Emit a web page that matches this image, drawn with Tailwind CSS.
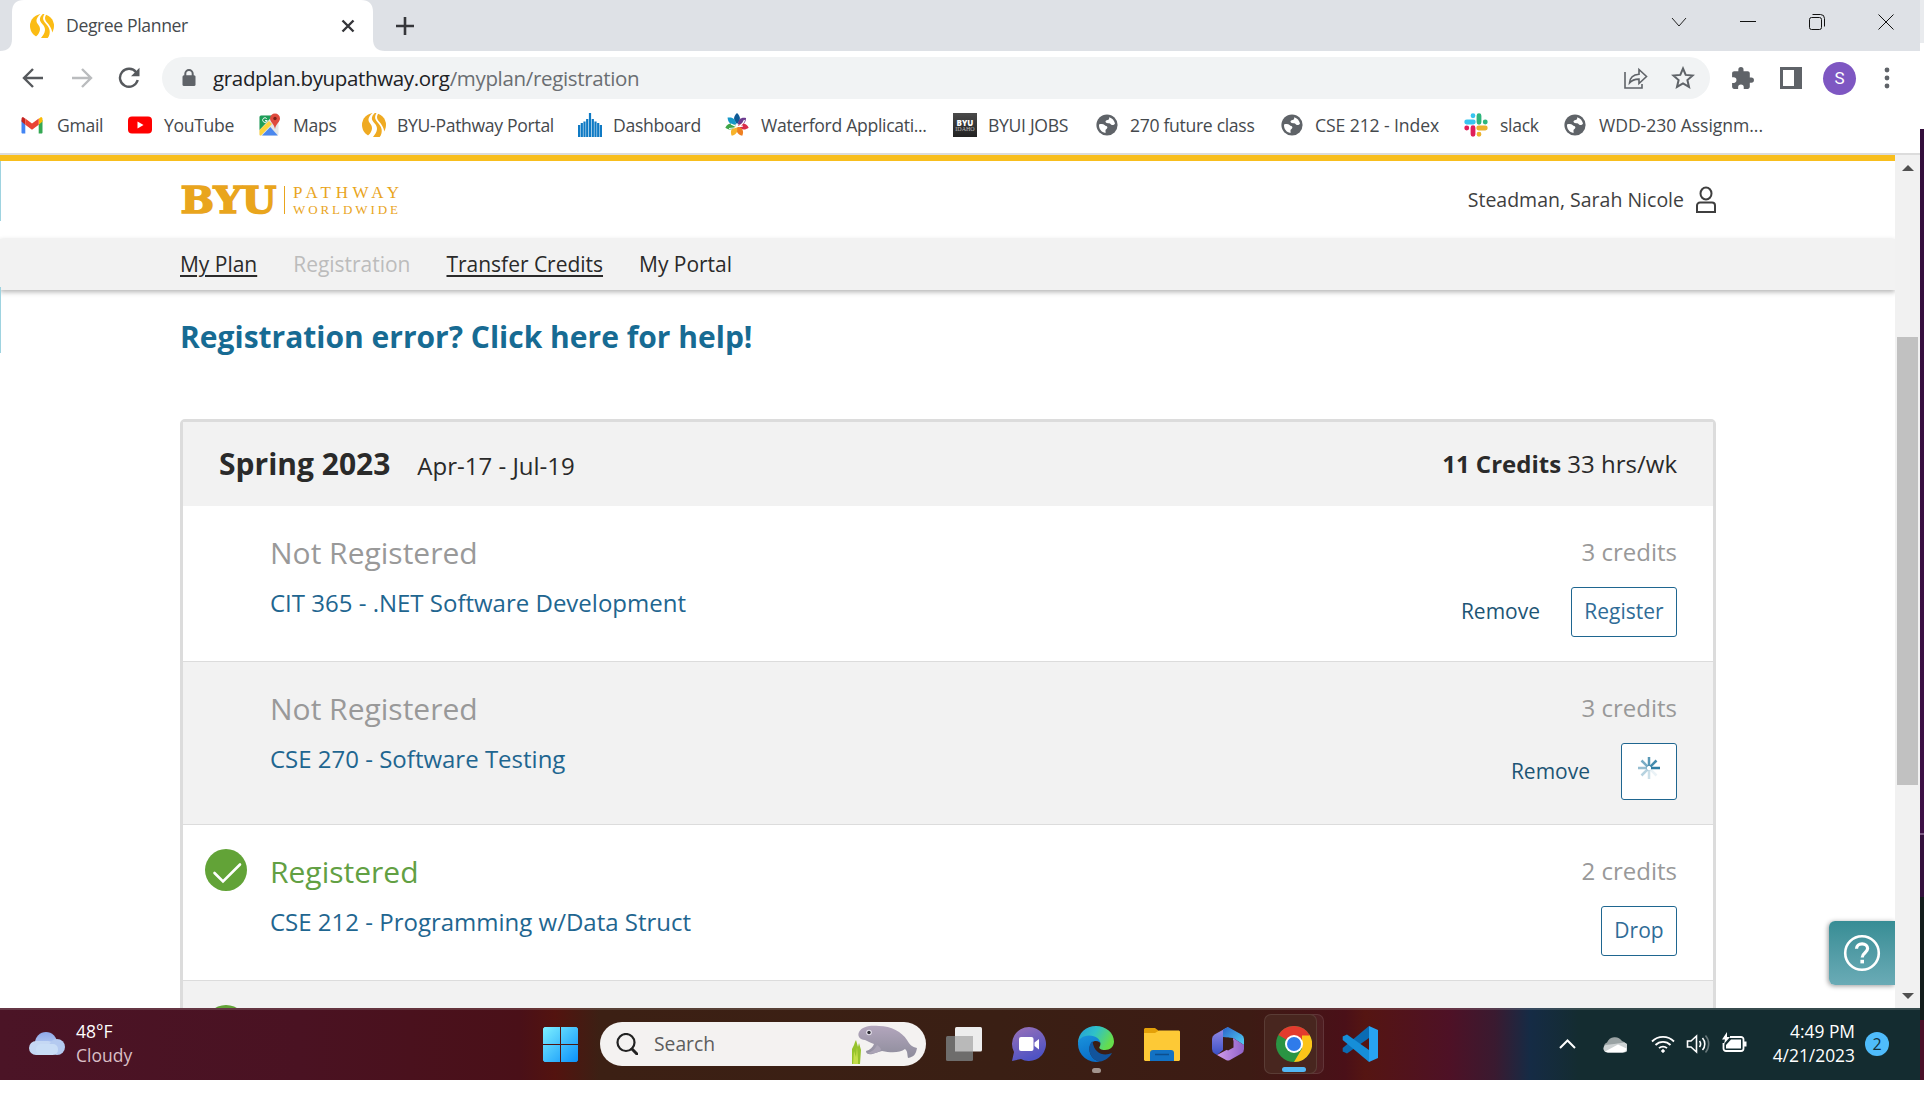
<!DOCTYPE html>
<html lang="en">
<head>
<meta charset="utf-8">
<title>Degree Planner</title>
<script src="https://cdn.jsdelivr.net/npm/@tailwindcss/browser@4"></script>
</head>
<body class="flex h-[1096px] w-[1924px] flex-col overflow-hidden bg-white font-['Open_Sans','Noto_Sans',sans-serif] whitespace-nowrap">

<svg class="hidden">
  <symbol id="globe" viewBox="0 0 24 24">
    <circle cx="12" cy="12" r="10.6" fill="#5f6368"/>
    <path d="M4 11.5c2.400-.8 4.400-.6 5.500.6 1 1.200 2.900.6 2.900 2.300 0 1.300-1.700 1.500-1.900 2.900-.1 1 .3 1.700 0 2.700C6.400 19.300 3.700 15.800 4 11.500zM14.200 4.200c3 .9 5.200 3.200 5.800 6.300-.8 1.200-1.900 1.900-3.200 1.500-1.300-.3-1.200-1.500-2.700-1.700-1.500-.1-2.900.1-3.500-1.200-.5-1.200.7-1.900 1.900-2.100 1.300-.2 1.900-1.300 1.700-2.800z" fill="#fff"/>
  </symbol>
  <symbol id="pathway" viewBox="0 0 24 24">
    <circle cx="12" cy="12" r="12" fill="currentColor"/>
    <path d="M10.500 0C5 5 6 8 8.500 11c3 4 1.500 8.500-4 13h17.500c1.500-6-1-11-4.500-15C15 6 14 4 16.500 0z" fill="#fff"/>
    <path d="M12.800 0C8.500 4 9.500 7 12.500 10.300c4 4.200 3 8.700-1.500 13.700h7c3-5.500 2-9.500-1.500-13.500C13 6.500 12 4.500 14.500 0z" fill="currentColor"/>
    <path d="M0 18c2 3.500 4 5 7 6H0zM24 17c-1.500 3.500-3.500 5.500-6.500 7H24z" fill="#fff"/>
  </symbol>
</svg>

<div class="flex h-[1080px]">
<div class="relative flex w-[1920px] flex-col">

  <!-- tab strip -->
  <div class="flex h-[51px] justify-between bg-[#dee1e6]">
    <div class="flex items-center">
      <div class="relative flex h-[51px] w-[385px] items-center pl-[30px]">
        <svg class="absolute inset-0" width="385" height="51"><path d="M0 51c8 0 12-4 12-12V12C12 4 16 0 24 0h337c8 0 12 4 12 12v27c0 8 4 12 12 12z" fill="#fff"/></svg>
        <svg class="relative text-[#fbbc14]" width="24" height="24"><use href="#pathway"/></svg>
        <span class="relative ml-[12px] w-[275px] text-[17.600px] tracking-[-.38px] text-[#45494d]">Degree Planner</span>
        <svg class="relative" width="14" height="14" viewBox="0 0 14 14"><path d="M1.500 1.500l11 11m0-11l-11 11" stroke="#35363a" stroke-width="2.400"/></svg>
      </div>
      <svg class="ml-[11px]" width="18" height="18" viewBox="0 0 18 18"><path d="M9 0v18M0 9h18" stroke="#35363a" stroke-width="2.600"/></svg>
    </div>
    <div class="flex h-[43px] items-center">
      <div class="flex w-[69px] justify-center"><svg width="16" height="16" fill="none" stroke="#222"><path d="M1 4l7 8 7-8"/></svg></div>
      <div class="flex w-[69px] justify-center"><svg width="16" height="16" fill="none" stroke="#111"><path d="M0 7.500h16"/></svg></div>
      <div class="flex w-[69px] justify-center"><svg width="16" height="16" fill="none" stroke="#111"><rect x="0.500" y="3.500" width="12" height="12" rx="2"/><path d="M3.500.500h8a4 4 0 0 1 4 4v8"/></svg></div>
      <div class="flex w-[69px] justify-center"><svg width="16" height="16" fill="none" stroke="#111"><path d="M.5.500l15 15m0-15l-15 15"/></svg></div>
    </div>
  </div>

  <!-- toolbar -->
  <div class="flex h-[54px] items-center bg-white pl-[22px]">
    <svg width="22" height="22" viewBox="0 0 22 22" fill="none" stroke="#56595d" stroke-width="2.400"><path d="M21 11H2.500M11 2l-9 9 9 9"/></svg>
    <svg class="ml-[27px]" width="22" height="22" viewBox="0 0 22 22" fill="none" stroke="#babcbe" stroke-width="2.400"><path d="M1 11h18.500M11 2l9 9-9 9"/></svg>
    <svg class="ml-[25px]" width="22" height="22" viewBox="0 0 22 22"><path d="M18.200 5.400A9 9 0 1 0 19.700 13" fill="none" stroke="#56595d" stroke-width="2.400"/><path d="M21.500.8v8.400H13z" fill="#56595d"/></svg>
    <div class="ml-[22px] flex h-[42px] w-[1548px] items-center rounded-full bg-[#f1f3f4] pl-[20px]">
      <svg width="14" height="18" viewBox="0 0 14 18"><path d="M3.300 7V4.800a3.700 3.700 0 0 1 7.400 0V7" fill="none" stroke="#5f6368" stroke-width="2"/><rect x=".5" y="6.300" width="13" height="10.700" rx="1.500" fill="#5f6368"/></svg>
      <span class="ml-[17px] w-[1411px] pt-px text-[20.500px] tracking-[-.34px] text-[#202124]">gradplan.byupathway.org<span class="text-[#6a6e72]">/myplan/registration</span></span>
      <svg width="24" height="24" viewBox="0 0 24 24" fill="none" stroke="#5f6368" stroke-width="1.600"><path d="M1 6v16h17v-4"/><path d="M5.500 17c.4-5.500 3.800-8.500 9.500-8.800V3.500l7.500 7-7.500 7v-4.400c-4-.1-7 1-9.500 3.900z"/></svg>
      <svg class="ml-[23px]" width="24" height="24" viewBox="0 0 24 24" fill="none" stroke="#5f6368" stroke-width="2"><path d="M12 2.500l2.700 6.400 7 .6-5.300 4.600 1.600 6.800-6-3.600-6 3.600 1.600-6.800-5.300-4.600 7-.6z"/></svg>
    </div>
    <svg class="ml-[20px]" width="25" height="25" viewBox="0 0 24 24" fill="#5f6368"><path d="M20.500 11H19V7c0-1.100-.9-2-2-2h-4V3.500a2.500 2.500 0 0 0-5 0V5H4c-1.100 0-2 .9-2 2v3.800h1.500a2.700 2.700 0 0 1 0 5.400H2V20c0 1.100.9 2 2 2h3.800v-1.500a2.700 2.700 0 0 1 5.400 0V22H17c1.100 0 2-.9 2-2v-4h1.500a2.500 2.500 0 0 0 0-5z"/></svg>
    <svg class="ml-[25px]" width="22" height="22" viewBox="0 0 22 22"><path d="M0 0h22v22H0zM3 3v16h11V3z" fill="#5f6368" fill-rule="evenodd"/></svg>
    <div class="ml-[21px] flex h-[33px] w-[33px] items-center justify-center rounded-full bg-[#7e57c2] pt-px text-[17px] text-white font-[Roboto,sans-serif]">S</div>
    <svg class="ml-[28px]" width="6" height="22" fill="#5f6368"><circle cx="3" cy="3" r="2.400"/><circle cx="3" cy="11" r="2.400"/><circle cx="3" cy="19" r="2.400"/></svg>
  </div>

  <!-- bookmarks bar -->
  <div class="flex h-[50px] items-center border-b-2 border-[#dcdcdc] bg-white pb-[7px] pl-[20px] text-[17.600px] tracking-[-.32px] text-[#45494d]">
    <div class="flex w-[108px] shrink-0 items-center gap-[13px]">
      <svg width="24" height="24" viewBox="0 0 24 24"><path d="M2 20.500h3.300v-9L1.500 6.800v13z" fill="#4285f4"/><path d="M18.700 20.500H22l.5-.7v-13l-3.800 4.700z" fill="#34a853"/><path d="M18.700 5.800l2.300-1.700c1 .2 1.500 1 1.500 2v2.500l-3.800 3.200z" fill="#fbbc04"/><path d="M5.300 5.800L3 4.100c-1 .2-1.500 1-1.500 2v2.500l3.800 3.200z" fill="#c5221f"/><path d="M5.300 5.500L12 10.600l6.700-5.100v6.200L12 16.800l-6.700-5.100z" fill="#ea4335"/></svg>
      Gmail</div>
    <div class="flex w-[130px] shrink-0 items-center gap-[12px]">
      <svg width="24" height="24" viewBox="0 0 24 24"><rect x="0" y="3.500" width="24" height="17" rx="4" fill="#f00"/><path d="M9.500 8.500v7l6-3.500z" fill="#fff"/></svg>
      YouTube</div>
    <div class="flex w-[104px] shrink-0 items-center gap-[11px]">
      <svg width="24" height="24" viewBox="0 0 24 24"><rect x="1.500" y="2.500" width="19" height="20" rx="1.500" fill="#e4e7e8"/><path d="M1.500 4a1.500 1.500 0 0 1 1.500-1.500h12L1.500 17z" fill="#1e9e58"/><path d="M1.500 17L11 8l3 3L3 22.500H2a1 1 0 0 1-.5-1z" fill="#fdd23c"/><path d="M4 22.500l8.300-8.500 7.500 8.500z" fill="#4a87ee"/><path d="M17 .5a5 5 0 0 0-5 5c0 3.500 4 5 5 10.500 1-5.500 5-7 5-10.500a5 5 0 0 0-5-5z" fill="#df4b3e"/><circle cx="17" cy="5.500" r="1.700" fill="#7c2119"/><path d="M8.700 5.600a2.300 2.300 0 1 0 .5 2H7" stroke="#fff" fill="none"/></svg>
      Maps</div>
    <div class="flex w-[216px] shrink-0 items-center gap-[11px]"><svg class="text-[#efaa22]" width="24" height="24"><use href="#pathway"/></svg>BYU-Pathway Portal</div>
    <div class="flex w-[147px] shrink-0 items-center gap-[11px]">
      <svg width="24" height="24" viewBox="0 0 24 24" fill="#0f7ac4"><path d="M0 12h2.200v12H0zM2.700 10h2.200v14H2.700zM5.400 8.500h2.200V24H5.400zM8.100 6h2.200v18H8.100zM10.900 0h2.200v24h-2.200zM13.700 6h2.200v18h-2.200zM16.400 8.500h2.200V24h-2.200zM19.100 10h2.200v14h-2.200zM21.800 12H24v12h-2.200z"/></svg>
      Dashboard</div>
    <div class="flex w-[228px] shrink-0 items-center gap-[12px]">
      <svg width="24" height="24" viewBox="-12 -12 24 24">
        <path d="M0-1C-4-5-3.800-8.500 0-12 3.800-8.500 4-5 0-1z" fill="#0e5a96"/>
        <path d="M0-1C-4-5-3.800-8 0-11.500 3.800-8 4-5 0-1z" transform="rotate(52)" fill="#6b3a8e"/>
        <path d="M0-1C-4-5-3.800-8.500 0-12 3.800-8.500 4-5 0-1z" transform="rotate(103)" fill="#d72c48"/>
        <path d="M0-1C-4-5-3.800-8.500 0-12 3.800-8.500 4-5 0-1z" transform="rotate(154)" fill="#ef8022"/>
        <path d="M0-1C-4-5-3.800-8.500 0-12 3.800-8.500 4-5 0-1z" transform="rotate(206)" fill="#f7b32b"/>
        <path d="M0-1C-4-5-3.800-8.500 0-12 3.800-8.500 4-5 0-1z" transform="rotate(257)" fill="#3fa648"/>
        <path d="M0-1C-4-5-3.800-8.500 0-12 3.800-8.500 4-5 0-1z" transform="rotate(308)" fill="#1598c8"/>
        <path d="M-8 3.500C0 3.500 6 0 7.500-5M-6-1C-3 1 2 2 6 1" fill="none" stroke="#fff" stroke-width="1.100"/>
      </svg>
      Waterford Applicati...</div>
    <div class="flex w-[142px] shrink-0 items-center gap-[11px]">
      <div class="flex h-6 w-6 flex-col items-center justify-center bg-linear-to-b from-[#4a4a4a] to-[#222] tracking-normal"><span class="text-[8px] leading-[7px] font-extrabold text-white">BYU</span><span class="text-[6px] leading-[6px] text-[#bbb] font-['Liberation_Serif',serif]">IDAHO</span></div>
      BYUI JOBS</div>
    <div class="flex w-[185px] shrink-0 items-center gap-[11px]"><svg width="24" height="24"><use href="#globe"/></svg>270 future class</div>
    <div class="flex w-[184px] shrink-0 items-center gap-[11px] tracking-[-.1px]"><svg width="24" height="24"><use href="#globe"/></svg>CSE 212 - Index</div>
    <div class="flex w-[99px] shrink-0 items-center gap-[12px]">
      <svg width="24" height="24" viewBox="0 0 24 24" fill="none" stroke-width="4.800" stroke-linecap="round"><path d="M2.700 9h6.600M9 2.700v.1" stroke="#36c5f0"/><path d="M15 2.700v6.600M21.300 9h-.1" stroke="#2eb67d"/><path d="M14.700 15h6.600M15 21.300v-.1" stroke="#ecb22e"/><path d="M9 14.700v6.600M2.700 15h.1" stroke="#e01e5a"/></svg>
      slack</div>
    <div class="flex items-center gap-[12px] tracking-[-.06px]"><svg width="24" height="24"><use href="#globe"/></svg>WDD-230 Assignm...</div>
  </div>

  <!-- viewport -->
  <div class="flex h-[853px]">
    <div class="relative flex w-[1895px] flex-col overflow-hidden bg-white">
      <div class="absolute top-[6px] left-0 h-[60px] w-px bg-[#9ed3e0]"></div>
      <div class="absolute top-[132px] left-0 h-[66px] w-px bg-[#9ed3e0]"></div>

      <header class="flex h-[84px] shrink-0 items-center justify-between border-t-[6px] border-[#f8be1d] pr-[178px] pl-[180px]">
        <svg class="overflow-visible" width="224" height="32" viewBox="0 0 224 32" fill="#e9a51d">
          <text x="0.500" y="29" font-family="DejaVu Serif" font-weight="bold" font-size="36.500" textLength="96" lengthAdjust="spacingAndGlyphs" stroke="#e9a51d" stroke-width="1.500">BYU</text>
          <path d="M104 2h1v28h-1z"/>
          <text x="113" y="14" font-family="Liberation Serif" font-size="17" textLength="106" lengthAdjust="spacing">PATHWAY</text>
          <text x="113" y="29.500" font-family="Liberation Serif" font-size="13" textLength="105" lengthAdjust="spacing">WORLDWIDE</text>
        </svg>
        <div class="flex items-center text-[19.500px] text-[#3f3f3f]">Steadman, Sarah Nicole
          <svg class="ml-[11px]" width="22" height="28" viewBox="0 0 22 28" fill="none" stroke="#3f3f3f" stroke-width="2"><ellipse cx="11" cy="7.500" rx="5.500" ry="6"/><path d="M2 26v-6.500a3 3 0 0 1 3-3h12a3 3 0 0 1 3 3V26z"/></svg>
        </div>
      </header>

      <nav class="flex h-[51px] shrink-0 items-center gap-[36px] bg-[#f2f2f2] pt-[1px] pl-[180px] text-[21px] tracking-[-.02px] text-[#2a2a2a] shadow-[0_2px_5px_rgba(0,0,0,.3)]">
        <a class="underline decoration-2 underline-offset-[3px]">My Plan</a>
        <a class="text-[#bcbcbc]">Registration</a>
        <a class="underline decoration-2 underline-offset-[3px]">Transfer Credits</a>
        <a>My Portal</a>
      </nav>

      <main class="flex grow flex-col px-[180px] pt-[27px]">
        <a class="text-[30px] leading-[40px] font-bold text-[#176b93]">Registration error? Click here for help!</a>

        <section class="mt-[62px] w-[1536px] rounded-t-[5px] border-[3px] border-[#dcdcdc]">
          <div class="flex h-[84px] items-center justify-between bg-[#f2f2f2] pr-[36px] pl-[36px] text-[24px] text-[#2a2a2a]">
            <div class="flex items-baseline pb-[2px]"><h2 class="text-[30px] font-bold">Spring 2023</h2><span class="ml-[27px]">Apr-17 - Jul-19</span></div>
            <div><b class="font-bold">11 Credits</b> 33 hrs/wk</div>
          </div>

          <div class="flex justify-between border-b border-[#dcdcdc] bg-white pt-[26px] pr-[36px] pb-[24px] pl-[87px]">
            <div class="pt-px">
              <div class="text-[30px] leading-[40px] text-[#999]">Not Registered</div>
              <a class="mt-[12px] block text-[24px] leading-[36px] text-[#1f6690]">CIT 365 - .NET Software Development</a>
            </div>
            <div class="flex flex-col items-end">
              <div class="text-[24px] leading-[40px] text-[#999]">3 credits</div>
              <div class="mt-[15px] flex items-center gap-[31px] text-[21px]">
                <a class="text-[#1d5575]">Remove</a>
                <button class="flex h-[50px] w-[106px] items-center justify-center rounded-[3px] border-[1.500px] border-[#1f6690] bg-white text-[#2f6c97]">Register</button>
              </div>
            </div>
          </div>

          <div class="flex justify-between border-b border-[#dcdcdc] bg-[#f2f2f2] pt-[26px] pr-[36px] pb-[24px] pl-[87px]">
            <div class="pt-px">
              <div class="text-[30px] leading-[40px] text-[#999]">Not Registered</div>
              <a class="mt-[12px] block text-[24px] leading-[36px] text-[#1f6690]">CSE 270 - Software Testing</a>
            </div>
            <div class="flex flex-col items-end">
              <div class="text-[24px] leading-[40px] text-[#999]">3 credits</div>
              <div class="mt-[15px] flex items-center gap-[31px] text-[21px]">
                <a class="text-[#1d5575]">Remove</a>
                <div class="flex h-[57px] w-[56px] items-center justify-center rounded-[3px] border-[1.500px] border-[#1f6690] bg-white pb-[7px]">
                  <svg width="22" height="22" viewBox="-11 -11 22 22" fill="none" stroke="#2f7ea4" stroke-width="2.500">
                    <path d="M2 0h9"/><path d="M1.400-1.400L7.500-7.500" opacity=".9"/><path d="M0-2v-9" opacity=".8"/><path d="M-1.400-1.400L-7.500-7.500" opacity=".65"/><path d="M-2 0h-9" opacity=".5"/><path d="M-1.400 1.400L-7.500 7.500" opacity=".35"/><path d="M0 2v9" opacity=".25"/><path d="M1.400 1.400L7.500 7.500" opacity=".1"/>
                  </svg>
                </div>
              </div>
            </div>
          </div>

          <div class="flex border-b border-[#dcdcdc] bg-white pt-[26px] pr-[36px] pb-[24px] pl-[22px]">
            <svg class="-mt-[2px]" width="42" height="42" viewBox="0 0 42 42"><circle cx="21" cy="21" r="21" fill="#62a337"/><path d="M9.500 24l8.500 8.500L35 15.500" fill="none" stroke="#fff" stroke-width="2.600" stroke-linecap="round"/></svg>
            <div class="ml-[23px] grow pt-px">
              <div class="text-[30px] leading-[40px] text-[#62a043]">Registered</div>
              <a class="mt-[12px] block text-[24px] leading-[36px] text-[#1f6690]">CSE 212 - Programming w/Data Struct</a>
            </div>
            <div class="flex flex-col items-end">
              <div class="text-[24px] leading-[40px] text-[#999]">2 credits</div>
              <button class="mt-[15px] flex h-[50px] w-[76px] items-center justify-center rounded-[3px] border-[1.500px] border-[#1f6690] bg-white text-[21px] text-[#2f6c97]">Drop</button>
            </div>
          </div>

          <div class="flex h-[156px] bg-[#f2f2f2] pt-[24px] pl-[22px]">
            <svg width="42" height="42"><circle cx="21" cy="21" r="21" fill="#62a337"/></svg>
          </div>
        </section>
      </main>

      <div class="absolute right-0 bottom-[23px] flex h-[64px] w-[66px] items-center justify-center rounded-l-[6px] bg-linear-to-b from-[#378d95] to-[#6aabb6] shadow-[-1px_1px_5px_rgba(0,0,0,.4)]">
        <svg width="38" height="38" viewBox="0 0 38 38" fill="none" stroke="#fff"><circle cx="19" cy="19" r="16.800" stroke-width="2.600"/><path d="M13.500 14.800c0-3.200 2.400-5 5.600-5s5.500 1.900 5.500 4.800c0 4.100-5.400 4.300-5.400 9" stroke-width="3.200"/><path d="M19.200 25.800v3.600" stroke-width="3.600"/></svg>
      </div>
    </div>

    <!-- scrollbar -->
    <div class="flex w-[25px] flex-col items-center bg-[#f1f1f1]">
      <svg class="mt-[10px] shrink-0" width="12" height="6"><path d="M0 6l6-6 6 6z" fill="#505050"/></svg>
      <div class="mt-[166px] h-[448px] w-[21px] shrink-0 bg-[#c1c1c1]"></div>
      <svg class="mt-[208px] shrink-0" width="12" height="6"><path d="M0 0l6 6 6-6z" fill="#505050"/></svg>
    </div>
  </div>

  <!-- taskbar -->
  <div class="flex h-[72px] items-center border-t-2 border-white/15 bg-[linear-gradient(90deg,#4b1426_0,#4a1222_300px,#4a1018_520px,#53130f_555px,#3c2014_600px,#3a1f14_1000px,#3d1b14_1250px,#4a1018_1345px,#551512_1365px,#4e1126_1450px,#3a1a30_1495px,#152b45_1530px,#142c30_1580px,#142c30_1920px)] pb-[2px] [background-origin:border-box]">
    <svg class="ml-[29px]" width="36" height="24" viewBox="0 0 36 24"><defs><linearGradient id="cl" x2="0" y2="1"><stop stop-color="#8fa9ea"/><stop offset="1" stop-color="#c9ddf6"/></linearGradient></defs><circle cx="17" cy="11" r="11" fill="url(#cl)"/><rect y="9" width="26" height="14" rx="7" fill="#c5d8f4"/><circle cx="28" cy="15" r="8" fill="#b4caf0"/><rect x="7" y="12" width="22" height="11" rx="5" fill="#c9ddf6"/></svg>
    <div class="ml-[11px] w-[467px] pb-[2px] text-[17.500px] leading-[24px] text-white"><div>48°F</div><div class="text-[#d9bfc5]">Cloudy</div></div>
    <svg width="35" height="35" viewBox="0 0 35 35"><defs><linearGradient id="wn" x2="1" y2="1"><stop stop-color="#7df0ff"/><stop offset="1" stop-color="#0a90fa"/></linearGradient></defs><path d="M1.500 0H17v17H0V1.500zM18 0h15.500L35 1.500V17H18zM0 18h17v17H1.500L0 33.500zM18 18h17v15.500L33.500 35H18z" fill="url(#wn)"/></svg>
    <div class="ml-[22px] flex h-[44px] w-[326px] items-center rounded-full bg-[#f4f2f1] pl-[16px]">
      <svg width="22" height="22" viewBox="0 0 22 22" fill="none" stroke="#222"><circle cx="10" cy="9.500" r="8.500" stroke-width="2.200"/><path d="M16 16l5 5" stroke-width="3" stroke-linecap="round"/></svg>
      <span class="ml-[16px] w-[197px] text-[19.300px] text-[#5d5d5d]">Search</span>
      <svg width="67" height="40" viewBox="0 0 67 40"><defs><linearGradient id="mn" x2="0" y2="1"><stop stop-color="#b3a6bd"/><stop offset="1" stop-color="#8d8c9b"/></linearGradient></defs>
        <path d="M1 40V25l2-4 1-3 1-2 2 7 1-4 2 7-1 14z" fill="#96c22c"/><path d="M2 40l1-13 2 6 1-10 1 12v5z" fill="#c4de4a"/>
        <path d="M8 8c3-6 12-7 20-6 12 0 23 6 28 14 3 5 5 7 10 8-1 6-3 9-9 10-1-4 0-6-3-9-5 4-14 4-23 2l-7 2c-4 2-9 2-9-2 4-1 7-4 8-7-4-1-6-3-9-4-5 0-8-4-6-8z" fill="url(#mn)"/><path d="M16 29c5-1 8-4 10-8 2 1 4 3 4 5-3 3-10 5-14 3z" fill="#aaa3b5"/><circle cx="18" cy="8.500" r="2.800" fill="#e8e4ee"/><circle cx="18" cy="8.500" r="1.700" fill="#2c2a33"/></svg>
    </div>
    <svg class="ml-[20px]" width="36" height="34" viewBox="0 0 36 34"><rect x="9" width="27" height="24.500" rx="1.500" fill="#ededed"/><rect y="9" width="27" height="25" rx="1.500" fill="#6e6d6c"/><path d="M9 9h18v15.500H9z" fill="#b9b9b9"/></svg>
    <svg class="ml-[30px]" width="34" height="34" viewBox="0 0 34 34"><defs><linearGradient id="ch" x2=".4" y2="1"><stop stop-color="#9a72b8"/><stop offset="1" stop-color="#4f53c4"/></linearGradient></defs><path d="M17 0a17 17 0 1 1-8 32L0 34l2-9A17 17 0 0 1 17 0z" fill="url(#ch)"/><rect x="7" y="10" width="14.500" height="14" rx="2" fill="#fff"/><path d="M22.500 15.500l4.500-3.500v10.500L22.500 19z" fill="#fff"/></svg>
    <div class="relative ml-[32px] h-[36px] w-[36px]">
      <svg width="36" height="36" viewBox="0 0 36 36"><defs><linearGradient id="e1" x2="1" y2=".4"><stop stop-color="#249bd8"/><stop offset=".5" stop-color="#2fc1c9"/><stop offset="1" stop-color="#66dd4c"/></linearGradient><linearGradient id="e2" x2=".3" y2="1"><stop stop-color="#1a93dc"/><stop offset="1" stop-color="#0a6fc8"/></linearGradient></defs>
        <path d="M0 17C0 7 8 0 18 0s18 7 18 15.500c0 5-4 8.500-9 8.500-4 0-6.500-1.500-5.500-3 3-4.500-1-8-6.500-8C8 13 2 15 0 17z" fill="url(#e1)"/>
        <path d="M0 18c0-5 5-8.500 11-8.500 7 0 11.500 4 11.500 8.500 0-3.500-11-6-11 5.500C11.500 30 17 35 22 35.500A18 18 0 0 1 0 18z" fill="url(#e2)"/>
        <path d="M14.500 15c-7 7-2 19 7.500 20.600 5-1 9.500-4 12-8.600-8 3.500-18 1-19.500-12z" fill="#12549c"/></svg>
      <div class="absolute -bottom-[11px] left-[14px] h-[5px] w-[9px] rounded-full bg-[#a3948d]"></div>
    </div>
    <svg class="ml-[30px]" width="36" height="34" viewBox="0 0 36 34"><path d="M1 1h10l4 3v4H0V2z" fill="#e3a008"/><path d="M0 6h11l4-2.500h20l1 1V33l-1 1H1l-1-1z" fill="#fdc936"/><path d="M6 34V26a3 3 0 0 1 3-3h18a3 3 0 0 1 3 3v8z" fill="#1272c4"/><path d="M11 27.500h14" stroke="#0d4f8d" stroke-width="1.500"/></svg>
    <svg class="ml-[32px]" width="32" height="34" viewBox="0 0 32 34"><defs><linearGradient id="m1" x2="0" y2="1"><stop stop-color="#9a8ee8"/><stop offset="1" stop-color="#3a4fc4"/></linearGradient><linearGradient id="m2" x2="1" y2="1"><stop stop-color="#2a63c8"/><stop offset="1" stop-color="#52d0f4"/></linearGradient><linearGradient id="m3" x2="1"><stop stop-color="#d09bea"/><stop offset="1" stop-color="#8f62c8"/></linearGradient></defs>
      <path d="M16 0L2.500 7.500Q0 9 0 12v10q0 3 2.500 4.500L5 28l6-5V10z" fill="url(#m1)"/><path d="M11 2.500L16 0l13.500 7.500Q32 9 32 12v6l-11-7-10-1z" fill="url(#m2)"/><path d="M5 28l16-8.500V11l11 7v4q0 3-2.500 4.500L18 33q-2 1-4 0z" fill="url(#m3)"/><path d="M16 10.500l5.500 3v7L16 23.500l-5-3v-7z" fill="#3b1d14"/></svg>
    <div class="relative ml-[20px] flex h-[60px] w-[60px]">
      <div class="absolute inset-y-0 right-0 w-[20px] rounded-r-[7px] border border-l-0 border-white/10 bg-white/5"></div>
      <div class="relative flex h-[60px] w-[53px] items-center justify-center rounded-[7px] border border-white/10 bg-[#48261f] pl-[6px]">
        <svg width="36" height="36" viewBox="0 0 36 36"><circle cx="18" cy="18" r="18" fill="#2a9443"/><path d="M18 18L2.400 9A18 18 0 0 1 33.600 9z" fill="#e33b2e"/><path d="M33.600 9A18 18 0 0 1 18 36l8-13.500L26 9z" fill="#fcc419"/><path d="M18 9h15.600" stroke="#e33b2e"/><circle cx="18" cy="18" r="9" fill="#fff"/><circle cx="18" cy="18" r="7" fill="#2f7bea"/></svg>
        <div class="absolute bottom-[1px] left-[17px] h-[5px] w-[24px] rounded-full bg-[#52b7f5]"></div>
      </div>
    </div>
    <svg class="ml-[18px]" width="36" height="36" viewBox="0 0 36 36"><path d="M27 0v12L5 27.500 .7 25.500V22z" fill="#0a6cb4"/><path d="M27 36V24L5 8.500.7 10.500V14z" fill="#168ed8"/><path d="M27 0l9 4v28l-9 4z" fill="#27a3f2"/></svg>

    <svg class="ml-[181px]" width="17" height="10" viewBox="0 0 17 10" fill="none" stroke="#fff" stroke-width="2"><path d="M1 9l7.500-7.500L16 9"/></svg>
    <svg class="ml-[27px]" width="24" height="17" viewBox="0 0 24 17"><path d="M5 16A5 5 0 0 1 4 6.500 8.500 8.500 0 0 1 19 5a6 6 0 0 1 4 9z" fill="#9aa3a4"/><path d="M4.500 16.500a4 4 0 0 1-2-7.500L11 8l10-1.500a5 5 0 0 1-1 10z" fill="#cdd2d3"/><path d="M2 15.500L15 8.500l8.500 4a4.500 4.500 0 0 1-4 4H5z" fill="#fff"/></svg>
    <svg class="ml-[24px]" width="24" height="18" viewBox="0 0 24 18" fill="none" stroke="#fff" stroke-width="1.800"><path d="M1 6.500a15.500 15.500 0 0 1 22 0M4.500 10a10.500 10.500 0 0 1 15 0M8 13.200a5.800 5.800 0 0 1 8 0"/><circle cx="12" cy="16" r="1.300" fill="#fff" stroke-width="1"/></svg>
    <svg class="ml-[11px]" width="25" height="20" viewBox="0 0 25 20" fill="none" stroke="#fff" stroke-width="1.600"><path d="M1.500 7v6h3.500l5.500 5V2L5 7z"/><path d="M13.500 7a5 5 0 0 1 0 6M16.500 4a9 9 0 0 1 0 12"/><path d="M19.500 1.500a13 13 0 0 1 0 17" opacity=".35"/></svg>
    <svg class="-mt-[4px] ml-[11px]" width="25" height="21" viewBox="0 0 25 21"><path d="M8 5h11a2.500 2.500 0 0 1 2.500 2.500v9A2.500 2.500 0 0 1 19 19H4a2.500 2.500 0 0 1-2.500-2.500V11" fill="none" stroke="#fff" stroke-width="1.800"/><path d="M9 7.500h10V16.500H4V13z" fill="#fff"/><path d="M22 9.500h2.500v5H22z" fill="#fff"/><path d="M5 0L0 7.500h3L2 12l6-7H5z" fill="#fff"/></svg>
    <div class="w-[108px] pb-[2px] text-right text-[17.400px] leading-[24px] text-white"><div>4:49 PM</div><div>4/21/2023</div></div>
    <div class="ml-[10px] flex h-[24px] w-[24px] items-center justify-center rounded-full bg-[#4fbcfb] text-[16px] text-[#12303c]">2</div>
  </div>
</div>

<!-- sliver of the second window on the right -->
<div class="h-[1080px] w-[4px] bg-[linear-gradient(180deg,#e9ebee_0,#e9ebee_43px,#fff_43px,#fff_129px,#330e3b_129px,#3d0f45_833px,#7d5a84_833px,#7d5a84_835px,#33103c_835px,#33103c_897px,#131c1c_897px,#131c1c_1020px,#4a0f28_1020px)]"></div>
</div>
</body>
</html>
